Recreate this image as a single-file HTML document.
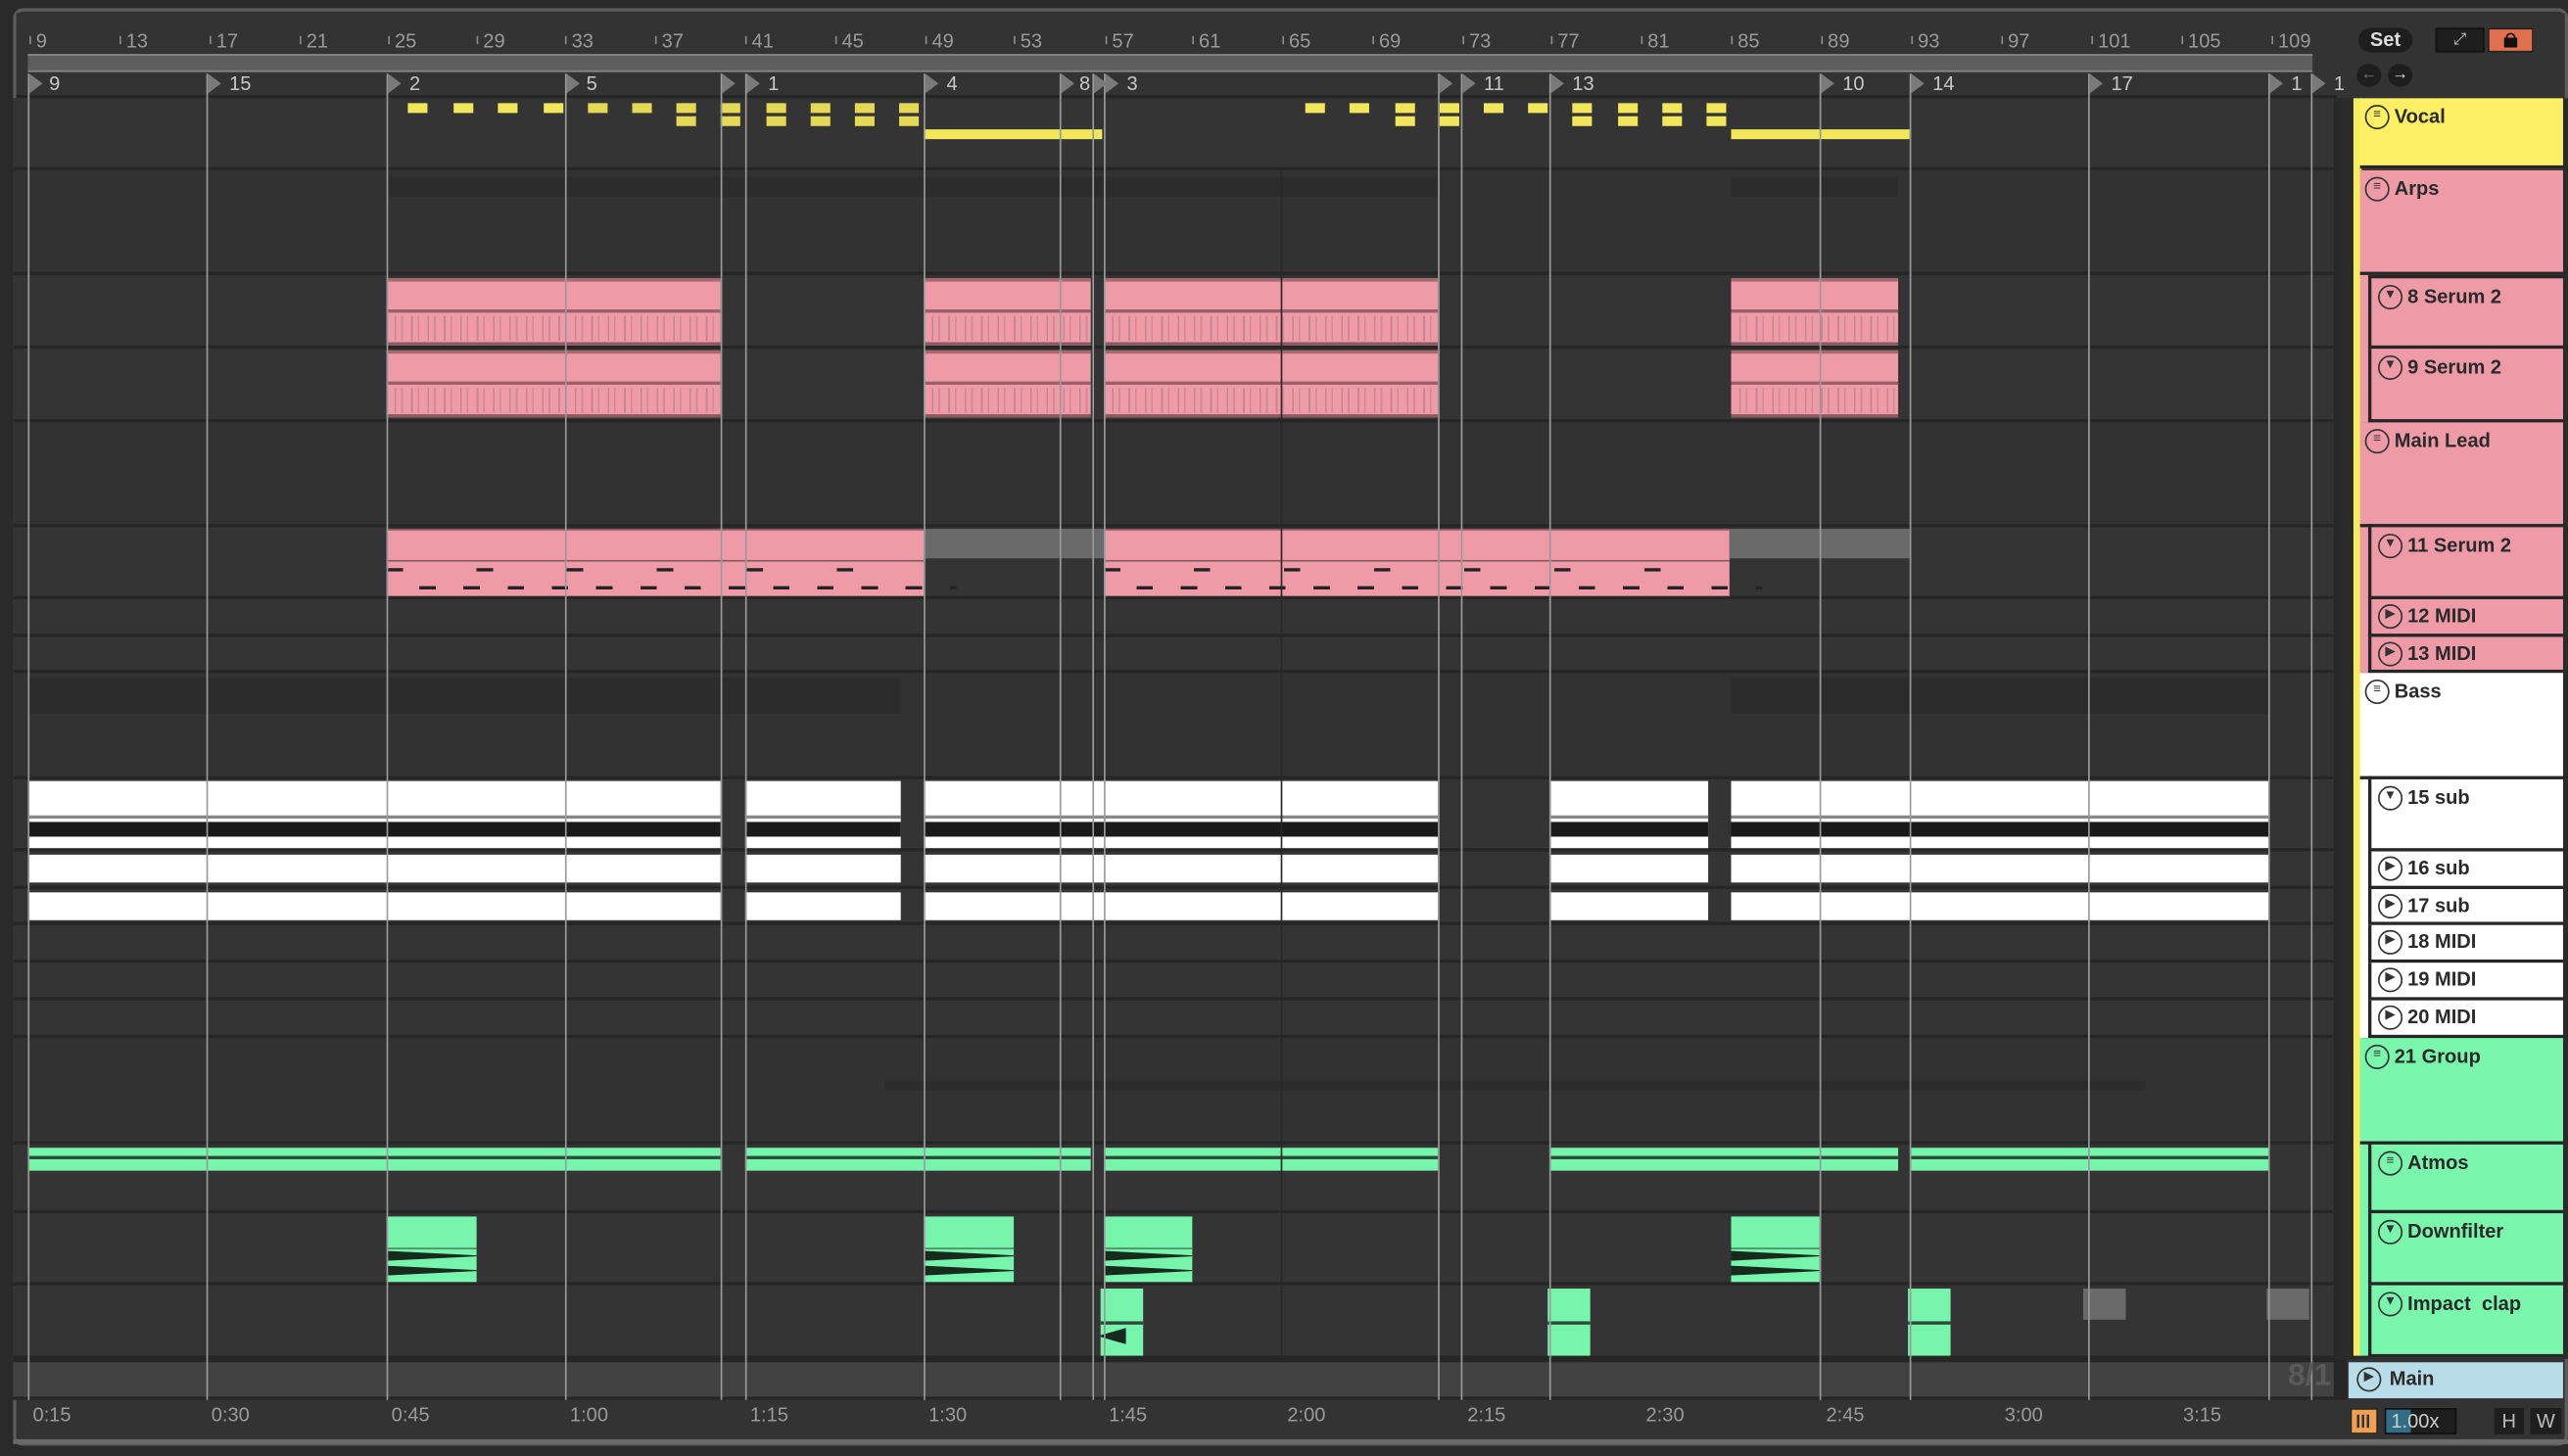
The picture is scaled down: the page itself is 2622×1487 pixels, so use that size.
<!DOCTYPE html>
<html><head><meta charset="utf-8"><style>
html,body{margin:0;padding:0;background:#2a2a2a;overflow:hidden;width:2622px;height:1486px}
#s{position:absolute;left:0;top:0;width:1568px;height:889px;transform:scale(1.67219);transform-origin:0 0;background:#2a2a2a;font-family:"Liberation Sans",sans-serif}
#s div{position:absolute;box-sizing:border-box}
.r{left:8px;width:1417px;background:#343434}
.rn{font-size:12px;color:#9a9a9a;top:18px}
.tk{width:1px;background:#8a8a8a;height:5px;top:22px}
.loc{top:45px;width:0;height:0;border-top:6px solid transparent;border-bottom:6px solid transparent;border-left:8px solid #7a7a7a}
.ll{font-size:12px;color:#c8c8c8;top:44px}
.vl{top:45px;width:1px;height:812px;background:#9a9a9a}
.yd{background:#f2e65a;width:12px;height:6px}
.pk{background:#ef9aa7}
.wh{background:#fff}
.gr{background:#78f5ac}
.h{left:1441px;width:124px;font-weight:bold;font-size:12px;color:#2a2a2a;padding:4px 0 0 21px;border-bottom:2px solid #262626}
.h.s{left:1446px;width:119px;border-left:2px solid #262626;padding-left:22px}
.ic{position:absolute;left:3px;top:4px;width:13px;height:13px;border:1.5px solid #333;border-radius:50%;font-size:8px;line-height:10px;text-align:center;font-weight:normal;color:#333}
.h.s .ic{left:4px}
.tm{font-size:12px;color:#9a9a9a;top:857px}
.lo{left:0;top:21px;width:100%;height:15px;background:repeating-linear-gradient(90deg,transparent 0 5px,#c78591 5px 6px,transparent 6px 9px,#d08a96 9px 10px)}
.wv{left:0;width:100%;height:6px;background:#162a1e;clip-path:polygon(0 0,100% 45%,100% 55%,0 100%)}
</style></head><body><div id="s">
<div style="left:8px;top:5px;width:1560px;height:878px;border:2px solid #5c5c5c;border-radius:6px;background:#333"></div>
<div style="left:10px;top:8px;width:1556px;height:52px;background:#333"></div>
<div class="rn" style="left:22px">9</div><div class="rn" style="left:77px">13</div><div class="rn" style="left:132px">17</div><div class="rn" style="left:187px">21</div><div class="rn" style="left:241px">25</div><div class="rn" style="left:295px">29</div><div class="rn" style="left:349px">33</div><div class="rn" style="left:404px">37</div><div class="rn" style="left:459px">41</div><div class="rn" style="left:514px">45</div><div class="rn" style="left:569px">49</div><div class="rn" style="left:623px">53</div><div class="rn" style="left:679px">57</div><div class="rn" style="left:732px">61</div><div class="rn" style="left:787px">65</div><div class="rn" style="left:842px">69</div><div class="rn" style="left:897px">73</div><div class="rn" style="left:951px">77</div><div class="rn" style="left:1006px">81</div><div class="rn" style="left:1061px">85</div><div class="rn" style="left:1116px">89</div><div class="rn" style="left:1171px">93</div><div class="rn" style="left:1226px">97</div><div class="rn" style="left:1281px">101</div><div class="rn" style="left:1336px">105</div><div class="rn" style="left:1391px">109</div>
<div class="tk" style="left:18px"></div><div class="tk" style="left:73px"></div><div class="tk" style="left:128px"></div><div class="tk" style="left:183px"></div><div class="tk" style="left:237px"></div><div class="tk" style="left:291px"></div><div class="tk" style="left:345px"></div><div class="tk" style="left:400px"></div><div class="tk" style="left:455px"></div><div class="tk" style="left:510px"></div><div class="tk" style="left:565px"></div><div class="tk" style="left:619px"></div><div class="tk" style="left:675px"></div><div class="tk" style="left:728px"></div><div class="tk" style="left:783px"></div><div class="tk" style="left:838px"></div><div class="tk" style="left:893px"></div><div class="tk" style="left:947px"></div><div class="tk" style="left:1002px"></div><div class="tk" style="left:1057px"></div><div class="tk" style="left:1112px"></div><div class="tk" style="left:1167px"></div><div class="tk" style="left:1222px"></div><div class="tk" style="left:1277px"></div><div class="tk" style="left:1332px"></div><div class="tk" style="left:1387px"></div>
<div style="left:17px;top:33px;width:1395px;height:11px;background:#5e5e5e;border-top:1px solid #888;border-bottom:1px solid #888"></div>
<div style="left:10px;top:58px;width:1417px;height:2px;background:#262626"></div>
<div style="left:8px;top:60px;width:1425px;height:795px;background:#262626"></div>
<div class="r" style="top:60px;height:42px"></div>
<div class="r" style="top:104px;height:62px;background:#323232"></div>
<div class="r" style="top:168px;height:43px"></div>
<div class="r" style="top:213px;height:43px"></div>
<div class="r" style="top:258px;height:62px;background:#323232"></div>
<div class="r" style="top:322px;height:42px"></div>
<div class="r" style="top:366px;height:21px"></div>
<div class="r" style="top:389px;height:20px"></div>
<div class="r" style="top:411px;height:63px;background:#323232"></div>
<div class="r" style="top:476px;height:42px"></div>
<div class="r" style="top:520px;height:21px"></div>
<div class="r" style="top:543px;height:20px"></div>
<div class="r" style="top:565px;height:21px"></div>
<div class="r" style="top:588px;height:21px"></div>
<div class="r" style="top:611px;height:21px"></div>
<div class="r" style="top:634px;height:63px;background:#323232"></div>
<div class="r" style="top:699px;height:40px"></div>
<div class="r" style="top:741px;height:42px"></div>
<div class="r" style="top:785px;height:43px"></div>
<div class="r" style="top:832px;height:21px;background:#424242"></div>
<div style="left:236px;top:108px;width:642px;height:12px;background:#2c2c2c"></div>
<div style="left:1057px;top:108px;width:102px;height:12px;background:#2c2c2c"></div>
<div style="left:17px;top:414px;width:533px;height:22px;background:#2c2c2c"></div>
<div style="left:1057px;top:414px;width:328px;height:22px;background:#2c2c2c"></div>
<div style="left:540px;top:660px;width:770px;height:6px;background:#2c2c2c"></div>
<!-- Vocal -->
<div class="yd" style="left:249px;top:63px"></div><div class="yd" style="left:277px;top:63px"></div><div class="yd" style="left:304px;top:63px"></div><div class="yd" style="left:332px;top:63px"></div><div class="yd" style="left:359px;top:63px;background:#e4d955"></div><div class="yd" style="left:386px;top:63px;background:#e4d955"></div><div class="yd" style="left:413px;top:63px;background:#e4d955"></div><div class="yd" style="left:440px;top:63px;background:#e4d955"></div><div class="yd" style="left:468px;top:63px;background:#e4d955"></div><div class="yd" style="left:495px;top:63px;background:#e4d955"></div><div class="yd" style="left:522px;top:63px;background:#e4d955"></div><div class="yd" style="left:549px;top:63px;background:#e4d955"></div>
<div class="yd" style="left:413px;top:71px;background:#e4d955"></div><div class="yd" style="left:440px;top:71px;background:#e4d955"></div><div class="yd" style="left:468px;top:71px;background:#e4d955"></div><div class="yd" style="left:495px;top:71px;background:#e4d955"></div><div class="yd" style="left:522px;top:71px;background:#e4d955"></div><div class="yd" style="left:549px;top:71px;background:#e4d955"></div>
<div style="left:564px;top:79px;width:109px;height:6px;background:#f2e65a"></div>
<div class="yd" style="left:797px;top:63px"></div><div class="yd" style="left:824px;top:63px"></div><div class="yd" style="left:852px;top:63px"></div><div class="yd" style="left:879px;top:63px"></div><div class="yd" style="left:906px;top:63px"></div><div class="yd" style="left:933px;top:63px"></div><div class="yd" style="left:960px;top:63px"></div><div class="yd" style="left:988px;top:63px"></div><div class="yd" style="left:1015px;top:63px"></div><div class="yd" style="left:1042px;top:63px"></div>
<div class="yd" style="left:852px;top:71px"></div><div class="yd" style="left:879px;top:71px"></div><div class="yd" style="left:960px;top:71px"></div><div class="yd" style="left:988px;top:71px"></div><div class="yd" style="left:1015px;top:71px"></div><div class="yd" style="left:1042px;top:71px"></div>
<div style="left:1057px;top:79px;width:109px;height:6px;background:#f2e65a"></div>
<!-- Serum clips -->
<div class="pk" style="left:236px;top:170px;width:204px;height:41px;border-top:2px solid #a86a72;border-bottom:2px solid #8a5a60"><div style="left:0;top:17px;width:100%;height:2px;background:#9c6068"></div><div class="lo"></div></div>
<div class="pk" style="left:564px;top:170px;width:102px;height:41px;border-top:2px solid #a86a72;border-bottom:2px solid #8a5a60"><div style="left:0;top:17px;width:100%;height:2px;background:#9c6068"></div><div class="lo"></div></div>
<div class="pk" style="left:674px;top:170px;width:204px;height:41px;border-top:2px solid #a86a72;border-bottom:2px solid #8a5a60"><div style="left:0;top:17px;width:100%;height:2px;background:#9c6068"></div><div class="lo"></div></div>
<div class="pk" style="left:1057px;top:170px;width:102px;height:41px;border-top:2px solid #a86a72;border-bottom:2px solid #8a5a60"><div style="left:0;top:17px;width:100%;height:2px;background:#9c6068"></div><div class="lo"></div></div>
<div class="pk" style="left:236px;top:214px;width:204px;height:41px;border-top:2px solid #a86a72;border-bottom:2px solid #8a5a60"><div style="left:0;top:17px;width:100%;height:2px;background:#9c6068"></div><div class="lo"></div></div>
<div class="pk" style="left:564px;top:214px;width:102px;height:41px;border-top:2px solid #a86a72;border-bottom:2px solid #8a5a60"><div style="left:0;top:17px;width:100%;height:2px;background:#9c6068"></div><div class="lo"></div></div>
<div class="pk" style="left:674px;top:214px;width:204px;height:41px;border-top:2px solid #a86a72;border-bottom:2px solid #8a5a60"><div style="left:0;top:17px;width:100%;height:2px;background:#9c6068"></div><div class="lo"></div></div>
<div class="pk" style="left:1057px;top:214px;width:102px;height:41px;border-top:2px solid #a86a72;border-bottom:2px solid #8a5a60"><div style="left:0;top:17px;width:100%;height:2px;background:#9c6068"></div><div class="lo"></div></div>
<!-- 11 Serum 2 -->
<div class="pk" style="left:236px;top:323px;width:328px;height:41px;border-top:1px solid #8a5a60"><div style="left:0;top:18px;width:100%;height:1px;background:#8a5a60"></div><div style="left:0;top:23px;width:100%;height:2px;background:repeating-linear-gradient(90deg,#222 0 10px,transparent 10px 55px)"></div><div style="left:20px;top:34px;width:100%;height:2px;background:repeating-linear-gradient(90deg,#222 0 10px,transparent 10px 27px)"></div></div>
<div style="left:564px;top:323px;width:110px;height:18px;background:#6a6a6a"></div>
<div class="pk" style="left:674px;top:323px;width:382px;height:41px;border-top:1px solid #8a5a60"><div style="left:0;top:18px;width:100%;height:1px;background:#8a5a60"></div><div style="left:0;top:23px;width:100%;height:2px;background:repeating-linear-gradient(90deg,#222 0 10px,transparent 10px 55px)"></div><div style="left:20px;top:34px;width:100%;height:2px;background:repeating-linear-gradient(90deg,#222 0 10px,transparent 10px 27px)"></div></div>
<div style="left:1056px;top:323px;width:110px;height:18px;background:#6a6a6a"></div>
<!-- sub clips -->
<div class="wh" style="left:17px;top:477px;width:423px;height:41px"><div style="left:0;top:21px;width:100%;height:2px;background:#888"></div><div style="left:0;top:25px;width:100%;height:9px;background:#1a1a1a"></div></div>
<div class="wh" style="left:455px;top:477px;width:95px;height:41px"><div style="left:0;top:21px;width:100%;height:2px;background:#888"></div><div style="left:0;top:25px;width:100%;height:9px;background:#1a1a1a"></div></div>
<div class="wh" style="left:564px;top:477px;width:314px;height:41px"><div style="left:0;top:21px;width:100%;height:2px;background:#888"></div><div style="left:0;top:25px;width:100%;height:9px;background:#1a1a1a"></div></div>
<div class="wh" style="left:947px;top:477px;width:96px;height:41px"><div style="left:0;top:21px;width:100%;height:2px;background:#888"></div><div style="left:0;top:25px;width:100%;height:9px;background:#1a1a1a"></div></div>
<div class="wh" style="left:1057px;top:477px;width:328px;height:41px"><div style="left:0;top:21px;width:100%;height:2px;background:#888"></div><div style="left:0;top:25px;width:100%;height:9px;background:#1a1a1a"></div></div>
<div class="wh" style="left:17px;top:522px;width:423px;height:17px"></div><div class="wh" style="left:455px;top:522px;width:95px;height:17px"></div><div class="wh" style="left:564px;top:522px;width:314px;height:17px"></div><div class="wh" style="left:947px;top:522px;width:96px;height:17px"></div><div class="wh" style="left:1057px;top:522px;width:328px;height:17px"></div>
<div class="wh" style="left:17px;top:545px;width:423px;height:17px"></div><div class="wh" style="left:455px;top:545px;width:95px;height:17px"></div><div class="wh" style="left:564px;top:545px;width:314px;height:17px"></div><div class="wh" style="left:947px;top:545px;width:96px;height:17px"></div><div class="wh" style="left:1057px;top:545px;width:328px;height:17px"></div>
<!-- Atmos -->
<div class="gr" style="left:17px;top:701px;width:423px;height:14px"><div style="left:0;top:5px;width:100%;height:2px;background:#2a4a38"></div></div>
<div class="gr" style="left:455px;top:701px;width:211px;height:14px"><div style="left:0;top:5px;width:100%;height:2px;background:#2a4a38"></div></div>
<div class="gr" style="left:674px;top:701px;width:204px;height:14px"><div style="left:0;top:5px;width:100%;height:2px;background:#2a4a38"></div></div>
<div class="gr" style="left:947px;top:701px;width:212px;height:14px"><div style="left:0;top:5px;width:100%;height:2px;background:#2a4a38"></div></div>
<div class="gr" style="left:1167px;top:701px;width:218px;height:14px"><div style="left:0;top:5px;width:100%;height:2px;background:#2a4a38"></div></div>
<!-- Downfilter -->
<div class="gr" style="left:236px;top:743px;width:55px;height:40px"><div style="left:0;top:19px;width:100%;height:1px;background:#4a8a64"></div><div class="wv" style="top:21px"></div><div class="wv" style="top:30px"></div></div>
<div class="gr" style="left:564px;top:743px;width:55px;height:40px"><div style="left:0;top:19px;width:100%;height:1px;background:#4a8a64"></div><div class="wv" style="top:21px"></div><div class="wv" style="top:30px"></div></div>
<div class="gr" style="left:674px;top:743px;width:54px;height:40px"><div style="left:0;top:19px;width:100%;height:1px;background:#4a8a64"></div><div class="wv" style="top:21px"></div><div class="wv" style="top:30px"></div></div>
<div class="gr" style="left:1057px;top:743px;width:54px;height:40px"><div style="left:0;top:19px;width:100%;height:1px;background:#4a8a64"></div><div class="wv" style="top:21px"></div><div class="wv" style="top:30px"></div></div>
<!-- Impact clap -->
<div class="gr" style="left:672px;top:787px;width:26px;height:41px"><div style="left:0;top:20px;width:100%;height:2px;background:#2a4a38"></div><div class="wv" style="top:24px;width:60%;height:10px;transform:scaleX(-1);left:0"></div></div>
<div class="gr" style="left:945px;top:787px;width:26px;height:41px"><div style="left:0;top:20px;width:100%;height:2px;background:#2a4a38"></div></div>
<div class="gr" style="left:1165px;top:787px;width:26px;height:41px"><div style="left:0;top:20px;width:100%;height:2px;background:#2a4a38"></div></div>
<div style="left:1272px;top:787px;width:26px;height:19px;background:#6a6a6a"></div>
<div style="left:1384px;top:787px;width:26px;height:19px;background:#6a6a6a"></div>
<!-- locator lines -->
<div class="vl" style="left:17px"></div><div class="vl" style="left:126px"></div><div class="vl" style="left:236px"></div><div class="vl" style="left:345px"></div><div class="vl" style="left:440px"></div><div class="vl" style="left:455px"></div><div class="vl" style="left:564px"></div><div class="vl" style="left:647px"></div><div class="vl" style="left:667px"></div><div class="vl" style="left:674px"></div><div class="vl" style="left:878px"></div><div class="vl" style="left:892px"></div><div class="vl" style="left:946px"></div><div class="vl" style="left:1111px"></div><div class="vl" style="left:1166px"></div><div class="vl" style="left:1275px"></div><div class="vl" style="left:1385px"></div><div class="vl" style="left:1411px"></div>
<div style="left:782px;top:104px;width:1px;height:725px;background:#282828"></div>
<div class="loc" style="left:18px"></div><div class="ll" style="left:30px">9</div>
<div class="loc" style="left:127px"></div><div class="ll" style="left:140px">15</div>
<div class="loc" style="left:237px"></div><div class="ll" style="left:250px">2</div>
<div class="loc" style="left:346px"></div><div class="ll" style="left:358px">5</div>
<div class="loc" style="left:441px"></div>
<div class="loc" style="left:456px"></div><div class="ll" style="left:469px">1</div>
<div class="loc" style="left:565px"></div><div class="ll" style="left:578px">4</div>
<div class="loc" style="left:648px"></div><div class="ll" style="left:659px">8</div>
<div class="loc" style="left:668px"></div>
<div class="loc" style="left:675px"></div><div class="ll" style="left:688px">3</div>
<div class="loc" style="left:879px"></div>
<div class="loc" style="left:893px"></div><div class="ll" style="left:906px">11</div>
<div class="loc" style="left:947px"></div><div class="ll" style="left:960px">13</div>
<div class="loc" style="left:1112px"></div><div class="ll" style="left:1125px">10</div>
<div class="loc" style="left:1167px"></div><div class="ll" style="left:1180px">14</div>
<div class="loc" style="left:1276px"></div><div class="ll" style="left:1289px">17</div>
<div class="loc" style="left:1386px"></div><div class="ll" style="left:1399px">1</div>
<div class="loc" style="left:1412px"></div><div class="ll" style="left:1425px">1</div>
<div style="left:10px;top:855px;width:1423px;height:24px;background:#333"></div>
<div class="tm" style="left:20px">0:15</div><div class="tm" style="left:129px">0:30</div><div class="tm" style="left:239px">0:45</div><div class="tm" style="left:348px">1:00</div><div class="tm" style="left:458px">1:15</div><div class="tm" style="left:567px">1:30</div><div class="tm" style="left:677px">1:45</div><div class="tm" style="left:786px">2:00</div><div class="tm" style="left:896px">2:15</div><div class="tm" style="left:1005px">2:30</div><div class="tm" style="left:1115px">2:45</div><div class="tm" style="left:1224px">3:00</div><div class="tm" style="left:1333px">3:15</div>
<div style="left:8px;top:879px;width:1560px;height:3px;background:#6a6a6a"></div>
<div style="left:1397px;top:830px;font-size:19px;font-weight:bold;color:#5a5a5a">8/1</div>
<!-- right panel -->
<div style="left:1426px;top:60px;width:142px;height:770px;background:#2a2a2a"></div>
<div style="left:1437px;top:60px;width:5px;height:768px;background:#f5ec5e"></div>
<div class="h" style="top:60px;height:43px;background:#fdf064"><span class="ic">≡</span>Vocal</div>
<div class="h" style="top:104px;height:64px;background:#ef9aa7"><span class="ic">≡</span>Arps</div>
<div style="left:1441px;top:168px;width:5px;height:90px;background:#ef9aa7"></div>
<div class="h s" style="top:168px;height:45px;background:#ef9aa7;border-top:2px solid #262626"><span class="ic">▼</span>8 Serum 2</div>
<div class="h s" style="top:213px;height:45px;background:#ef9aa7"><span class="ic">▼</span>9 Serum 2</div>
<div class="h" style="top:258px;height:64px;background:#ef9aa7"><span class="ic">≡</span>Main Lead</div>
<div style="left:1441px;top:322px;width:5px;height:89px;background:#ef9aa7"></div>
<div class="h s" style="top:320px;height:46px;background:#ef9aa7;border-top:2px solid #262626"><span class="ic">▼</span>11 Serum 2</div>
<div class="h s" style="top:366px;height:23px;background:#ef9aa7;padding-top:3px"><span class="ic" style="top:3px">▶</span>12 MIDI</div>
<div class="h s" style="top:389px;height:22px;background:#ef9aa7;padding-top:3px"><span class="ic" style="top:3px">▶</span>13 MIDI</div>
<div class="h" style="top:411px;height:65px;background:#fff"><span class="ic">≡</span>Bass</div>
<div style="left:1441px;top:476px;width:5px;height:158px;background:#fff"></div>
<div class="h s" style="top:474px;height:46px;background:#fff;border-top:2px solid #262626"><span class="ic">▼</span>15 sub</div>
<div class="h s" style="top:520px;height:23px;background:#fff;padding-top:3px"><span class="ic" style="top:3px">▶</span>16 sub</div>
<div class="h s" style="top:543px;height:22px;background:#fff;padding-top:3px"><span class="ic" style="top:3px">▶</span>17 sub</div>
<div class="h s" style="top:565px;height:23px;background:#fff;padding-top:3px"><span class="ic" style="top:3px">▶</span>18 MIDI</div>
<div class="h s" style="top:588px;height:23px;background:#fff;padding-top:3px"><span class="ic" style="top:3px">▶</span>19 MIDI</div>
<div class="h s" style="top:611px;height:23px;background:#fff;padding-top:3px"><span class="ic" style="top:3px">▶</span>20 MIDI</div>
<div class="h" style="top:634px;height:65px;background:#7af7ad"><span class="ic">≡</span>21 Group</div>
<div style="left:1441px;top:699px;width:5px;height:129px;background:#7af7ad"></div>
<div class="h s" style="top:697px;height:44px;background:#7af7ad;border-top:2px solid #262626"><span class="ic">≡</span>Atmos</div>
<div class="h s" style="top:741px;height:44px;background:#7af7ad"><span class="ic">▼</span>Downfilter</div>
<div class="h s" style="top:785px;height:44px;background:#7af7ad"><span class="ic">▼</span>Impact&nbsp; clap</div>
<div class="h" style="left:1434px;width:131px;top:832px;height:22px;background:#b8dde8;padding:3px 0 0 25px;border:0"><span class="ic" style="left:5px;top:3px">▶</span>Main</div>
<div style="left:1440px;top:17px;width:33px;height:15px;border-radius:8px;background:#1e1e1e;color:#ddd;font-size:12px;font-weight:bold;text-align:center;line-height:15px">Set</div>
<div style="left:1439px;top:39px;width:15px;height:14px;border-radius:50%;background:#1e1e1e;color:#777;font-size:10px;text-align:center;line-height:14px">←</div>
<div style="left:1458px;top:39px;width:15px;height:14px;border-radius:50%;background:#1e1e1e;color:#ddd;font-size:10px;text-align:center;line-height:14px">→</div>
<div style="left:1487px;top:17px;width:30px;height:15px;background:#1e1e1e;border:1px solid #111;color:#ccc;font-size:10px;text-align:center;line-height:13px">⤢</div>
<div style="left:1519px;top:17px;width:28px;height:15px;background:#e07050;border:1px solid #222"><div style="left:9px;top:5px;width:8px;height:6px;background:#111"></div><div style="left:10px;top:2px;width:6px;height:5px;border:1.5px solid #111;border-bottom:0;border-radius:3px 3px 0 0"></div></div>
<div style="left:1435px;top:860px;width:17px;height:16px;background:#f0a050;border:1px solid #222"><div style="left:3px;top:3px;width:9px;height:8px;background:repeating-linear-gradient(90deg,#333 0 1.5px,transparent 1.5px 3px)"></div></div>
<div style="left:1456px;top:860px;width:44px;height:16px;background:#1e1e1e;border:1px solid #111;color:#ccc;font-size:12px;line-height:14px;padding-left:3px"><div style="left:0;top:0;width:15px;height:14px;background:#2f6f86"></div><span style="position:relative">1.00x</span></div>
<div style="left:1523px;top:860px;width:18px;height:16px;background:#1e1e1e;color:#bbb;font-size:12px;text-align:center;line-height:16px">H</div>
<div style="left:1545px;top:860px;width:19px;height:16px;background:#1e1e1e;color:#bbb;font-size:12px;text-align:center;line-height:16px">W</div>
</div></body></html>
